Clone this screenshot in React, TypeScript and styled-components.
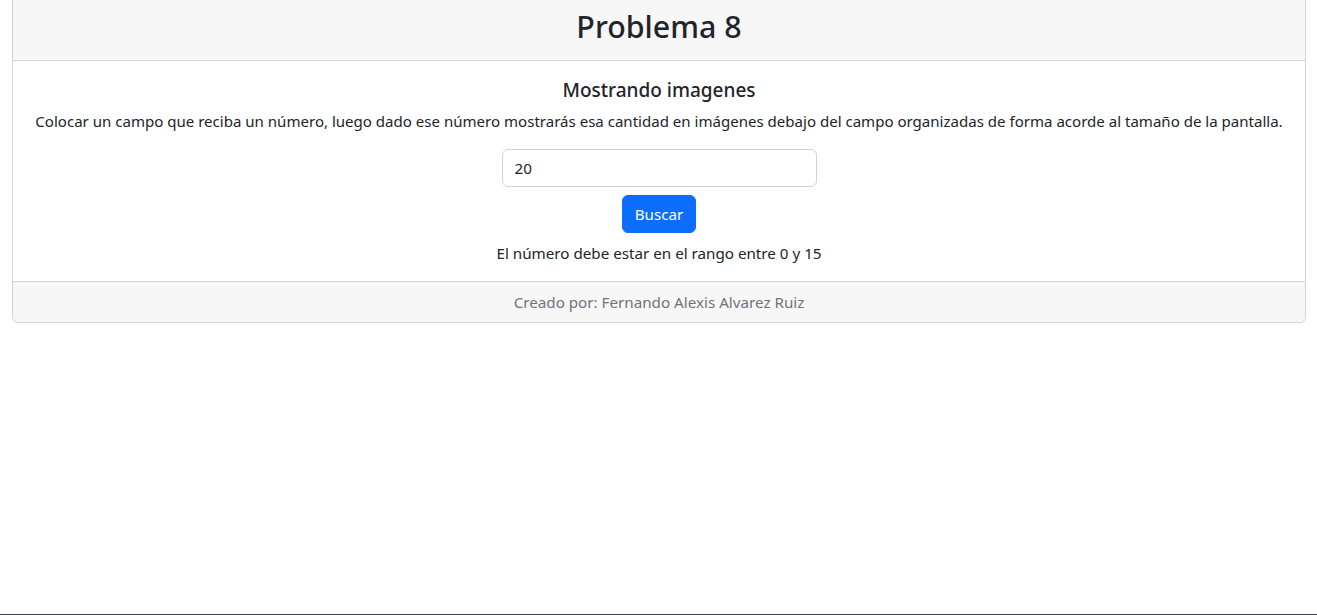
import React, { useState } from "react";
import styled, { createGlobalStyle } from "styled-components";

const Global = createGlobalStyle`
  html, body { margin: 0; background: #fff; }
  body {
    font-family: "Noto Sans", "Open Sans", sans-serif;
    font-size: 15.2px;
    line-height: 24px;
    color: #212529;
  }
  * { box-sizing: border-box; }
`;

const Page = styled.div`
  min-height: 100vh;
  padding: 0 11px 0 12px;
  border-bottom: 1px solid #3b4150;
`;

const Card = styled.div`
  display: flex;
  flex-direction: column;
  border: 1px solid #d3d3d4;
  border-top: 0;
  border-radius: 0 0 6px 6px;
  overflow: hidden;
  text-align: center;
`;

const CardHeader = styled.div`
  background: #f7f7f7;
  border-bottom: 1px solid #d3d3d4;
  padding: 8px 16px 14px;
`;

const Title = styled.h1`
  margin: 0;
  font-size: 30.4px;
  line-height: 38px;
  font-weight: 500;
`;

const CardBody = styled.div`
  display: flex;
  flex-direction: column;
  align-items: center;
  padding: 17px 16px 16px;
`;

const Subtitle = styled.h5`
  margin: 0 0 7px;
  font-size: 19px;
  line-height: 24px;
  font-weight: 500;
`;

const Text = styled.p<{ $gap?: number }>`
  margin: 0 0 ${(p) => p.$gap ?? 0}px;
`;

const Lead = styled(Text)`
  font-size: 15.05px;
`;

const Input = styled.input`
  width: 315px;
  height: 38px;
  padding: 6px 12px;
  font: inherit;
  color: #212529;
  border: 1px solid #ced4da;
  border-radius: 6px;
  outline: none;
  margin-bottom: 8px;
`;

const Button = styled.button`
  height: 38px;
  padding: 6px 12px;
  font: inherit;
  color: #fff;
  background: #0d6efd;
  border: 1px solid #0d6efd;
  border-radius: 6px;
  margin-bottom: 8px;
  cursor: pointer;
`;

const CardFooter = styled.div`
  background: #f7f7f7;
  border-top: 1px solid #d3d3d4;
  padding: 8px 16px;
  color: #6c757d;
`;

export default function App() {
  const [value, setValue] = useState("20");
  return (
    <>
      <Global />
      <Page>
        <Card>
          <CardHeader>
            <Title>Problema 8</Title>
          </CardHeader>
          <CardBody>
            <Subtitle>Mostrando imagenes</Subtitle>
            <Lead $gap={16}>
              Colocar un campo que reciba un número, luego dado ese número mostrarás esa cantidad en imágenes debajo del campo organizadas de forma acorde al tamaño de la pantalla.
            </Lead>
            <Input type="number" value={value} onChange={(e) => setValue(e.target.value)} />
            <Button>Buscar</Button>
            <Text>El número debe estar en el rango entre 0 y 15</Text>
          </CardBody>
          <CardFooter>Creado por: Fernando Alexis Alvarez Ruiz</CardFooter>
        </Card>
      </Page>
    </>
  );
}
